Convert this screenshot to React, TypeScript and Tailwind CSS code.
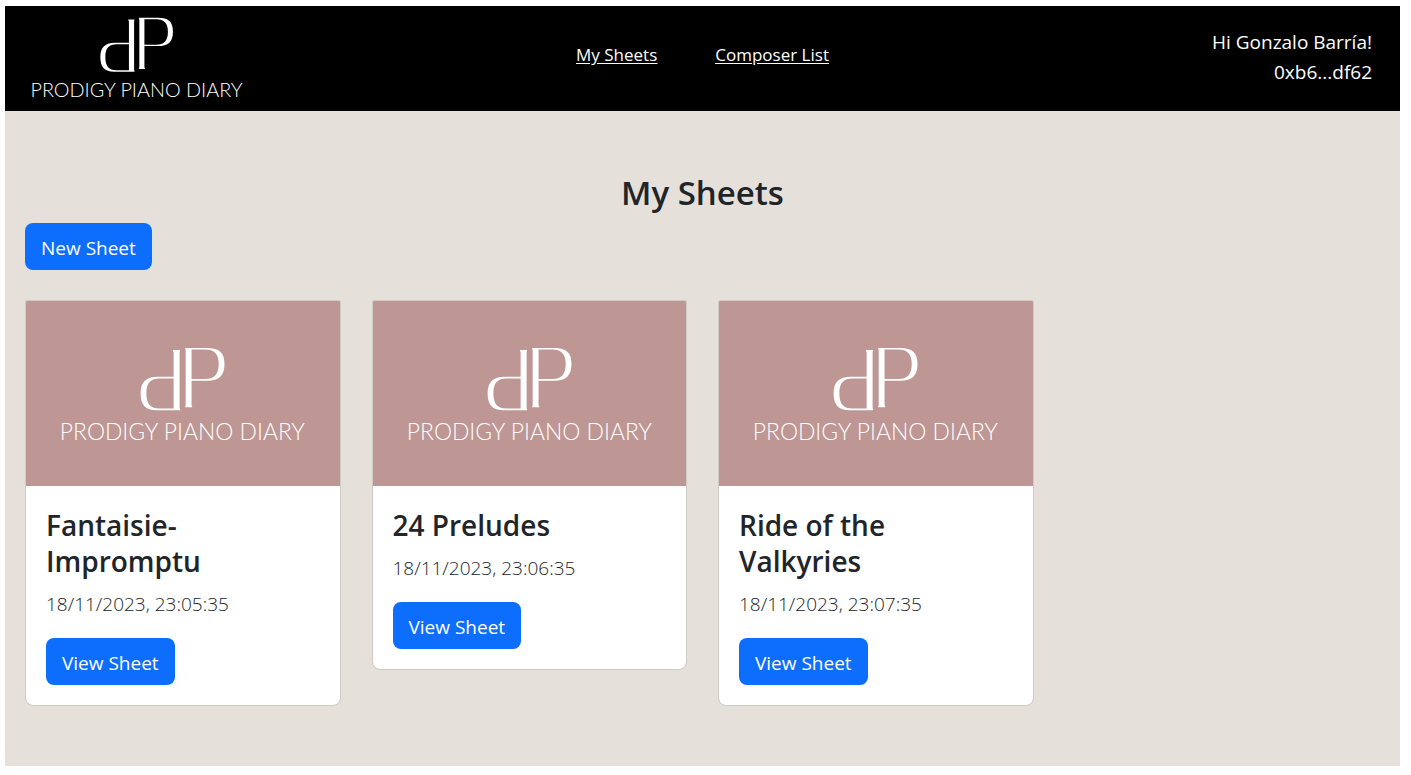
type Sheet = { id: number; title: string; createdAt: string };

const sheets: Sheet[] = [
  { id: 1, title: "Fantaisie-Impromptu", createdAt: "18/11/2023, 23:05:35" },
  { id: 2, title: "24 Preludes", createdAt: "18/11/2023, 23:06:35" },
  { id: 3, title: "Ride of the Valkyries", createdAt: "18/11/2023, 23:07:35" },
];

function Logo({ className }: { className: string }) {
  return (
    <svg viewBox="0 0 252 94" className={`overflow-visible ${className}`} fill="white" role="img" aria-label="Prodigy Piano Diary">
      {/* d: stem and bowl */}
      <path d="M116.500 3h7v1l-.3 1v56.500l.5 1v1H100C89 63.500 84 58.500 84 46.500C84 35 90 30 101 30h16.200V5l-.7-1zM117.200 31.700H103C94 31.700 89.800 36 89.800 46.500C89.800 57.500 94 61.900 103 61.900h14.200z" fillRule="evenodd" />
      {/* P: stem and bowl */}
      <path d="M128.800 1H151C163 1 168.300 5.500 168.300 17C168.300 28.500 163 33.800 151 33.800h-15.800V58.500l.6 1v1h-7v-1l.5-1V3l-.5-1zM135.200 2.600V32.100h13.800C158 32.100 162.500 27.500 162.500 17C162.500 7 158 2.600 149 2.600z" fillRule="evenodd" />
      <text x="126" y="93" textAnchor="middle" className="font-['Lato'] text-[23px] font-light">
        PRODIGY PIANO DIARY
      </text>
    </svg>
  );
}

function Header() {
  return (
    <header className="grid grid-cols-[1fr_auto_1fr] items-center bg-black px-[23px] pt-[11px] pb-[13px] text-white">
      <a href="#home" className="justify-self-start">
        <Logo className="w-[217px]" />
      </a>
      <nav className="flex gap-[58px] pb-1 text-[17px] leading-7 underline underline-offset-2">
        <a href="#sheets">My Sheets</a>
        <a href="#composers">Composer List</a>
      </nav>
      <div className="pr-[5px] text-right text-[19px] leading-[30px]">
        <p>Hi Gonzalo Barría!</p>
        <p>0xb6...df62</p>
      </div>
    </header>
  );
}

function Button({ children }: { children: string }) {
  return (
    <button type="button" className="rounded-lg bg-[#0d6efd] px-4 pt-2.5 pb-[7px] text-[19px] leading-[30px] text-white">
      {children}
    </button>
  );
}

function SheetCard({ sheet }: { sheet: Sheet }) {
  return (
    <article className="overflow-hidden rounded-lg rounded-t-xs border border-[#cfccc8] bg-white bg-clip-padding">
      <div className="flex aspect-[315/186] items-center justify-center bg-[#be9694]">
        <Logo className="w-4/5" />
      </div>
      <div className="px-5 pt-[21px] pb-5">
        <h2 className="mb-2.5 max-w-60 text-[28px] leading-9 font-semibold">{sheet.title}</h2>
        <p className="mb-[19px] text-[19px] leading-[30px] font-light">{sheet.createdAt}</p>
        <Button>View Sheet</Button>
      </div>
    </article>
  );
}

export default function App() {
  return (
    <div className="min-h-screen bg-white pt-1.5 pr-[11px] pb-[9px] pl-[5px] font-['Open_Sans','Noto_Sans',sans-serif] text-[#212529]">
      <div className="bg-[#e5e0da]">
        <Header />
        <main className="px-5 py-[60px]">
          <h1 className="mb-2 text-center text-[33px] leading-[44px] font-semibold">My Sheets</h1>
          <Button>New Sheet</Button>
          <div className="mt-[30px] grid grid-cols-4 items-start gap-[31px]">
            {sheets.map((sheet) => (
              <SheetCard key={sheet.id} sheet={sheet} />
            ))}
          </div>
        </main>
      </div>
    </div>
  );
}
